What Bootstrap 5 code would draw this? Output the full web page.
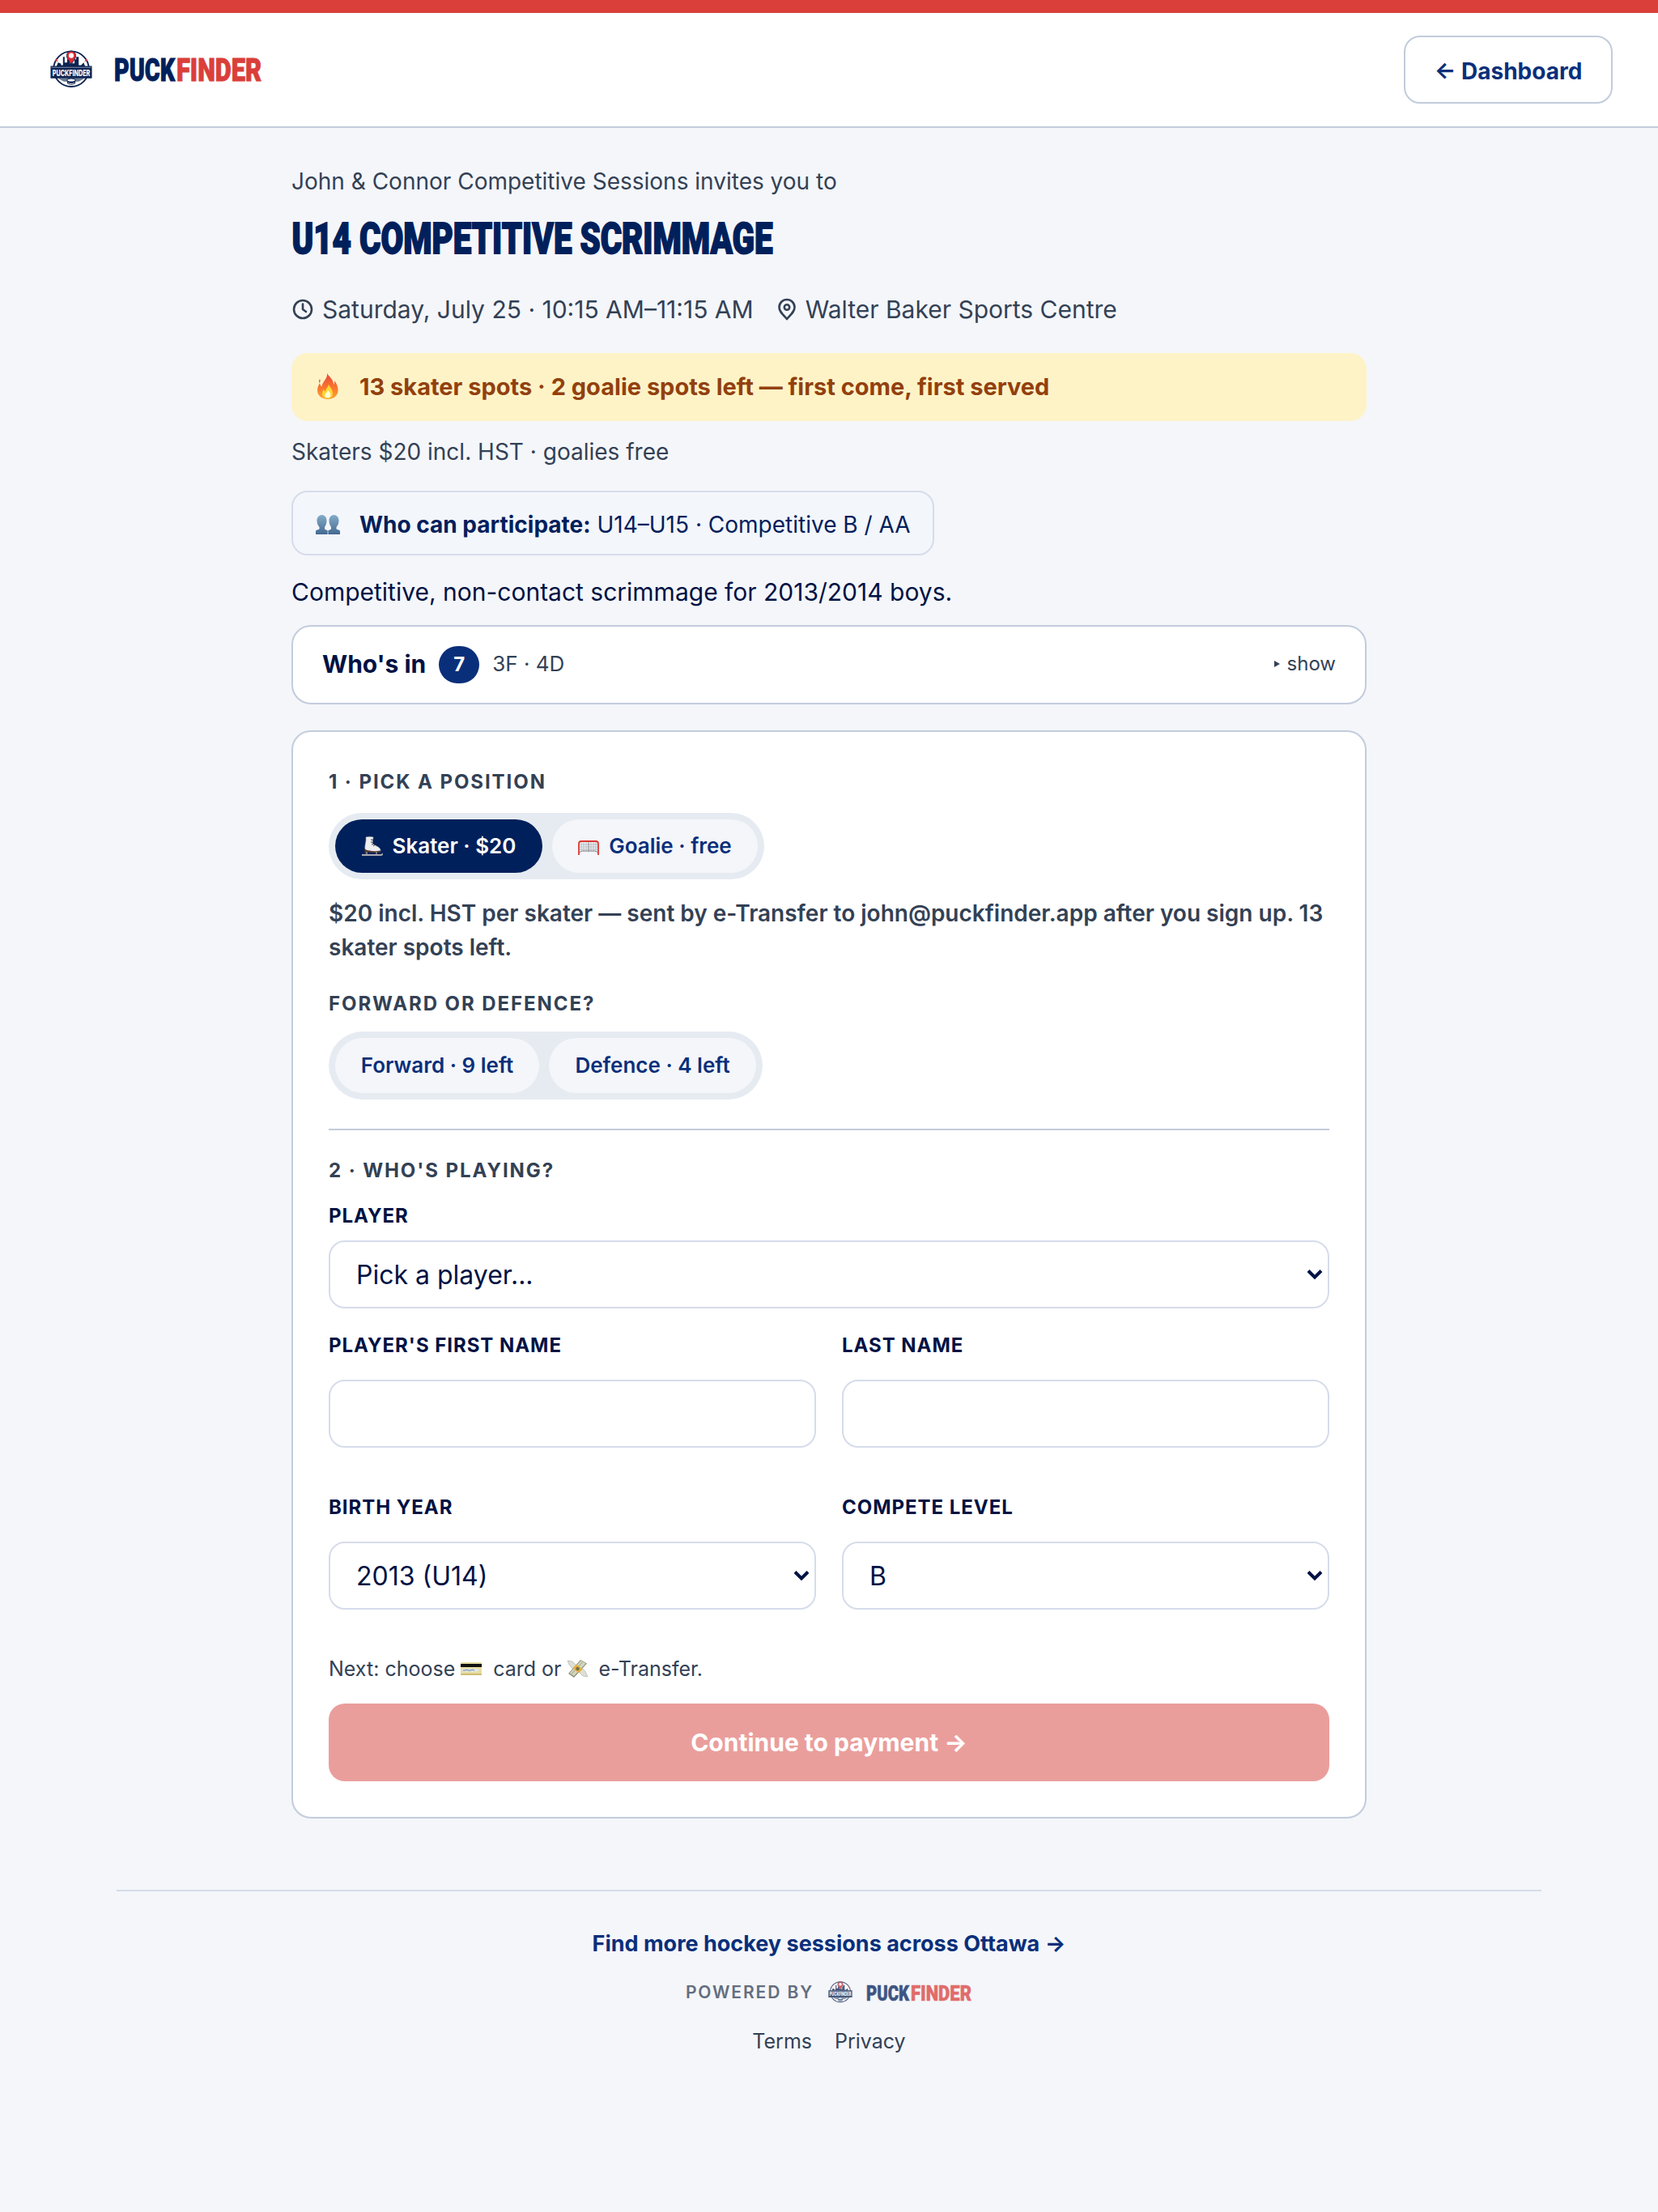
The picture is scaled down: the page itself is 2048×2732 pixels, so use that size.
<!DOCTYPE html>
<html lang="en">
<head>
    <meta charset="utf-8">
    <meta name="viewport" content="width=device-width, initial-scale=1">
    <title>U14 Competitive Scrimmage - PuckFinder</title>
    <link rel="stylesheet" href="https://cdn.jsdelivr.net/npm/bootstrap@5.3.2/dist/css/bootstrap.min.css">
    <style>
        :root {
            --navy: #00205b;
            --blue: #0a2f7a;
            --ink: #001244;
            --slate: #334155;
            --red: #da3f3a;
            --line: #c2ccdc;
            --line-soft: #d6dcea;
        }
        body {
            background-color: #f4f6fa;
            color: var(--ink);
            font-family: Inter, "Liberation Sans", sans-serif;
            font-size: 28px;
            line-height: 42px;
        }
        a {
            text-decoration: none;
        }
        .site-header {
            height: 158px;
            border-top: 16px solid var(--red);
            border-bottom: 2px solid var(--line);
            padding: 0 56px 0 62px;
        }
        .wordmark {
            font-family: Roboto, "Liberation Sans", sans-serif;
            font-weight: 900;
            overflow: visible;
        }
        .btn-dashboard {
            width: 258px;
            height: 84px;
            border: 2px solid var(--line);
            border-radius: 20px;
            background-color: #fff;
            color: var(--blue);
            font-size: 28px;
            font-weight: 700;
        }
        .page-col {
            width: 1328px;
            padding-top: 45px;
        }
        .text-slate {
            color: var(--slate);
        }
        .event-title {
            height: 66px;
            margin: 17px 0 31px;
        }
        .event-meta {
            height: 46px;
            font-size: 30px;
            line-height: 46px;
            margin-bottom: 31px;
        }
        .event-meta span {
            margin-left: 9px;
        }
        .event-meta .meta-when {
            margin-left: 10px;
        }
        .spots-banner {
            height: 84px;
            border-radius: 20px;
            background-color: #fef3c7;
            color: #92400e;
            font-size: 29px;
            font-weight: 700;
            padding-left: 28px;
            margin-bottom: 17px;
        }
        .who-can {
            width: 794px;
            height: 80px;
            border: 2px solid var(--line-soft);
            border-radius: 20px;
            background-color: #f3f6fb;
            color: var(--navy);
            padding: 3px 0 0 28px;
            margin: 27px 0 22px;
        }
        .event-desc {
            font-size: 30px;
            line-height: 46px;
            margin-bottom: 18px;
        }
        .panel {
            background-color: #fff;
            border: 2px solid var(--line);
            border-radius: 24px;
        }
        .roster {
            height: 98px;
            padding: 0 36px 3px 36px;
            margin-bottom: 32px;
            font-size: 26px;
        }
        .roster-title {
            font-size: 30px;
            font-weight: 700;
        }
        .roster-count {
            width: 50px;
            height: 46px;
            border-radius: 23px;
            background-color: var(--blue);
            font-size: 24px;
            font-weight: 700;
            margin: 3px 16px 0 16px;
        }
        .roster-toggle {
            font-size: 24px;
            padding-top: 1px;
        }
        .signup {
            height: 1344px;
            padding: 44px;
        }
        .step-label, .field-label {
            font-size: 24px;
            font-weight: 700;
            line-height: 35px;
            text-transform: uppercase;
        }
        .step-label {
            color: var(--slate);
            letter-spacing: 1.92px;
        }
        .field-label {
            letter-spacing: 0.96px;
            display: block;
        }
        .seg {
            display: flex;
            width: fit-content;
            gap: 12px;
            height: 84px;
            padding: 8px;
            border-radius: 42px;
            background-color: #e6ebf2;
            margin-top: 17px;
        }
        .seg-first {
            height: 82px;
            margin-top: 21px;
        }
        .seg-btn {
            border: 0;
            border-radius: 34px;
            background-color: #f4f6fa;
            color: var(--blue);
            font-size: 26px;
            font-weight: 600;
            padding: 0;
        }
        .seg-btn.chosen {
            background-color: var(--navy);
            color: #fff;
        }
        .w-skater { width: 256px; }
        .w-goalie { width: 254px; }
        .w-forward { width: 252px; }
        .w-defence { width: 256px; }
        .price-note {
            font-weight: 600;
            margin: 21px 0 31px;
        }
        .rule {
            border-top: 2px solid var(--line);
            margin: 36px 0 32px;
        }
        .player-label {
            margin: 21px 0 13px;
        }
        .signup .form-control, .signup .form-select {
            height: 84px;
            border: 2px solid var(--line-soft);
            border-radius: 20px;
            padding: 1px 32px 0;
            font-size: 32px;
            color: var(--ink);
            background-color: #fff;
        }
        .signup .form-select {
            background-image: url("data:image/svg+xml,%3csvg xmlns='http://www.w3.org/2000/svg' viewBox='0 0 20 14'%3e%3cpath fill='none' stroke='%23001244' stroke-width='4' d='M2 2.500l8 8 8-8'/%3e%3c/svg%3e");
            background-size: 20px 14px;
            background-position: right 6px center;
        }
        .two-up {
            display: grid;
            grid-template-columns: 1fr 1fr;
            column-gap: 32px;
            margin-top: 28px;
        }
        .two-up + .two-up {
            margin-top: 56px;
        }
        .two-up .field-label {
            margin-bottom: 25px;
        }
        .next-note {
            font-size: 25px;
            line-height: 38px;
            margin: 54px 0 24px;
        }
        .next-note svg {
            margin: 0 14px 0 7px;
        }
        .btn-pay {
            height: 96px;
            border: 0;
            border-radius: 20px;
            background-color: #ea9e9c;
            color: #fff;
            font-size: 30px;
            font-weight: 700;
            padding-bottom: 2px;
        }
        .site-footer {
            width: 1760px;
            border-top: 2px solid #d5dde7;
            margin-top: 88px;
            padding-top: 44px;
        }
        .more-link {
            color: var(--blue);
            font-size: 27px;
            font-weight: 700;
        }
        .powered {
            height: 32px;
            margin: 23px 0 26px;
            font-size: 21px;
            font-weight: 600;
            letter-spacing: 1.9px;
            opacity: 0.75;
        }
        .legal {
            font-size: 25px;
            line-height: 36px;
        }
        svg {
            flex: none;
        }
    </style>
</head>
<body>

<!-- Shared artwork -->
<svg width="0" height="0" class="position-absolute">
    <defs>
        <linearGradient id="flameOuter" x1="0" y1="0" x2="0" y2="1">
            <stop offset="0" stop-color="#e8453c"/>
            <stop offset="0.6" stop-color="#fb7a2d"/>
            <stop offset="1" stop-color="#fda63a"/>
        </linearGradient>
        <linearGradient id="bust" x1="0" y1="0" x2="0" y2="1">
            <stop offset="0" stop-color="#84abc8"/>
            <stop offset="1" stop-color="#446a92"/>
        </linearGradient>
        <symbol id="crest" viewBox="0 0 50 46">
            <circle cx="25" cy="22.7" r="21.3" fill="#fff" stroke="#0c2350" stroke-width="1.8"/>
            <path fill="#0c2350" d="M7 20l2-5 3 1 1 2h2V8h2v7h3v-4h3v5h6v-5h2V8h3v10h3l3-3 2 5z"/>
            <path fill="#6c7a94" d="M9 34h32l-7 4-18 0z"/>
            <path fill="#da3f3a" d="M8 13l-2-1 1-1zM42 13l2-1-1-1z" stroke="#da3f3a"/>
            <path fill="#e02b33" stroke="#0c2350" stroke-width="0.8" d="M25 17c-3-4.500-5.500-7-5.500-10.500a5.500 5.500 0 0 1 11 0C30.500 10 28 12.500 25 17z"/>
            <circle cx="25" cy="6.500" r="3" fill="#fff"/>
            <path fill="#0c2350" d="M0 19h50v15H0z"/>
            <path stroke="#8b98b0" stroke-width="0.9" d="M1 20.800h48"/>
            <text x="2.300" y="31.300" textLength="45.500" lengthAdjust="spacingAndGlyphs" fill="#fff" font-family="Inter, sans-serif" font-size="10" font-weight="800" letter-spacing="0">PUCKFINDER</text>
            <path fill="#0c2350" d="M20 35.500h10v4c0 3-10 3-10 0z"/>
            <ellipse cx="25" cy="36.200" rx="5" ry="2" fill="#fff" stroke="#0c2350"/>
            <path fill="none" stroke="#fff" stroke-width="0.8" d="M21 39.500c2 1.500 6 1.500 8 0"/>
        </symbol>
        <symbol id="flame" viewBox="0 0 26 32">
            <path fill="url(#flameOuter)" d="M12 0c2 4 8 7 8 14 1-1 1.500-2.500 1-5 3 4 5 8 4.500 13C25 28 20 32 13 32S0 28 0 21c0-4 2-7 3-9 .5 2 1 3.500 2.500 4.500C6 10 13 7 12 0z"/>
            <path fill="#ef5a3a" d="M3 7c1 2 1 3-.5 5C1.500 10 2 8.500 3 7z"/>
            <path fill="#fdd835" d="M14 13c0 3 5 6 5 12 0 4-3 6-6.500 6S6 29 6 25c0-2.500 1-4 2-5 .5 1.500 1 2 2 2.500C10 19 14 17 14 13z"/>
            <path fill="#fffde0" d="M13 21c3 3 4 5 3 7.500-1 2-5.500 2-6.500 0C8.500 26 12 25 13 21z"/>
        </symbol>
        <symbol id="people" viewBox="0 0 30 24">
            <path fill="url(#bust)" d="M0 24v-4.500c1.500-1 3-1.500 4.500-2V15C2.500 13 1.500 10 1.500 7c0-4 2.500-7 6-7s6 3 6 7c0 3-1 6-2.500 8v2.500l4 2 4-2V15c-1.500-2-2.500-5-2.500-8 0-4 2.500-7 6-7s6 3 6 7c0 3-1 6-3 8v2.500c1.500.5 3 1 4.500 2V24z"/>
            <path stroke="#e9f0f7" stroke-width="0.800" d="M15 19.500V24"/>
        </symbol>
        <symbol id="skate" viewBox="0 0 26 24">
            <path fill="#eceef0" stroke="#b9bdc2" stroke-width="0.600" d="M5 1c3-.8 6-.8 9 0l-1 7c2 4 9 4 10 9 0 2-1 2-3 2L5 18C2 13 6 8 5 1z"/>
            <path stroke="#3b3b3b" stroke-width="1" d="M11 4l3 .4M11 7l3 .4M12 10l3-.6M14 12l2-1.500"/>
            <path fill="#55392e" d="M3 15c3 3 6 2 9 3 4 1 8 0 11-.5.500 1.500-.5 2.500-2 2.500H10l-3-1v3H4z"/>
            <path stroke="#a8aab2" stroke-width="2" d="M0 23h24l2-1.500"/>
            <path stroke="#8d8f97" stroke-width="1.500" d="M6 19v3M18 19v3"/>
        </symbol>
        <symbol id="goal" viewBox="0 0 26 18">
            <path fill="#f1f1f3" d="M2 2h22v13H2z"/>
            <path fill="none" stroke="#aaaeb6" stroke-width="0.700" d="M4 2v12M7 2v12M10 2v12M16 2v12M19 2v12M22 2v12M2 5h22M2 8h22M2 11h22"/>
            <path fill="none" stroke="#85888e" stroke-width="1" d="M13 2v12M1 15l4-2h16l4 2"/>
            <path fill="none" stroke="#db3832" stroke-width="1.800" d="M1 18V4c0-2 1-3 3-3h18c2 0 3 1 3 3v14"/>
        </symbol>
        <symbol id="card-pay" viewBox="0 0 26 16">
            <rect width="26" height="16" rx="1.500" fill="#e6dda2"/>
            <path fill="#111" d="M0 2h26v4H0z"/>
            <path fill="#dfe4e6" d="M2 8h20v3.500H2z"/>
            <path fill="none" stroke="#6b86b5" stroke-width="1" d="M3 10h3l1-1 2 1h4l1-1 3 1"/>
            <path fill="#cdbd73" d="M0 14h26v.5c0 1-.5 1.500-1.500 1.500h-23C.5 16 0 15.500 0 14.500z"/>
        </symbol>
        <symbol id="money" viewBox="0 0 25 22">
            <path fill="#dcdfd6" stroke="#a9ada0" stroke-width="0.600" d="M0 1l6 1 5 5-1 5-5-2-3-4zM25 21l-6-1-5-5 1-5 5 2 3 4z"/>
            <path fill="#8a927a" d="M1 17L16 0l8 4.500L8 22z"/>
            <path fill="#d3d6bd" d="M2.500 16.500L16.500 1l6 3.500L8 20z"/>
            <path fill="none" stroke="#8a927a" stroke-width="0.800" d="M5 17.500L18.500 2.800"/>
            <path fill="#e5ad42" d="M6.500 10.500l4.500-5 7.500 6-4.500 5z"/>
            <circle cx="12.500" cy="11" r="2.200" fill="#6f7245"/>
        </symbol>
    </defs>
</svg>

<header class="site-header bg-white d-flex align-items-center justify-content-between">
    <a href="#" class="d-flex align-items-center">
        <svg width="52" height="48"><use href="#crest" width="52" height="47"/></svg>
        <svg class="wordmark ms-4" width="194" height="56">
            <text x="3" y="42" font-size="38.500" textLength="75" lengthAdjust="spacingAndGlyphs" fill="#00205b" stroke="#00205b" stroke-width="1">PUCK</text>
            <text x="80" y="42" font-size="38.500" textLength="105" lengthAdjust="spacingAndGlyphs" fill="#da3f3a" stroke="#da3f3a" stroke-width="1">FINDER</text>
        </svg>
    </a>
    <a href="#" class="btn-dashboard d-flex align-items-center justify-content-center pt-1">← Dashboard</a>
</header>

<main class="page-col mx-auto">
    <div class="text-slate">John &amp; Connor Competitive Sessions invites you to</div>
    <h1 class="event-title">
        <svg class="wordmark d-block" width="620" height="66">
            <text x="0.500" y="51" font-size="53.500" textLength="594" lengthAdjust="spacingAndGlyphs" fill="#00205b" stroke="#00205b" stroke-width="1.800">U14 COMPETITIVE SCRIMMAGE</text>
        </svg>
    </h1>
    <div class="event-meta text-slate d-flex align-items-center">
        <svg width="28" height="28" viewBox="0 0 28 28" fill="none" stroke="currentColor" stroke-width="2.600" stroke-linecap="round" stroke-linejoin="round">
            <circle cx="14" cy="14" r="11"/>
            <path d="M14 7.500V14l4 3"/>
        </svg>
        <span class="meta-when">Saturday, July 25 · 10:15 AM–11:15 AM</span>
        <svg class="ms-4" width="31" height="28" viewBox="-3 0 31 28" fill="none" stroke="currentColor" stroke-width="2.600" stroke-linejoin="round">
            <path d="M14 26C8.500 20 4.500 16.500 4.500 11.500a9.500 9.500 0 0 1 19 0C23.500 16.500 19.500 20 14 26z"/>
            <circle cx="14" cy="11.500" r="3.200"/>
        </svg>
        <span>Walter Baker Sports Centre</span>
    </div>

    <div class="spots-banner d-flex align-items-center">
        <svg class="ms-1 me-4" width="28" height="34"><use href="#flame" width="26" height="32"/></svg>
        <span>13 skater spots · 2 goalie spots left — first come, first served</span>
    </div>
    <div class="text-slate">Skaters $20 incl. HST · goalies free</div>

    <div class="who-can d-flex align-items-center">
        <svg class="me-4" width="30" height="24"><use href="#people" width="30" height="24"/></svg>
        <span><b>Who can participate:</b> U14–U15 · Competitive B / AA</span>
    </div>
    <div class="event-desc">Competitive, non-contact scrimmage for 2013/2014 boys.</div>

    <div class="panel roster d-flex align-items-center">
        <span class="roster-title">Who's in</span>
        <span class="roster-count text-white d-flex align-items-center justify-content-center">7</span>
        <span class="text-slate">3F · 4D</span>
        <span class="roster-toggle ms-auto text-slate d-flex align-items-center">
            <svg class="me-2" width="8" height="8"><path d="M0 0l7 4-7 4z" fill="currentColor"/></svg>
            show
        </span>
    </div>

    <form class="panel signup">
        <div class="step-label">1 · Pick a position</div>
        <div class="seg seg-first">
            <button type="button" class="seg-btn chosen w-skater d-flex align-items-center justify-content-center">
                <svg class="me-2" width="30" height="24"><use href="#skate" width="26" height="24"/></svg>
                Skater · $20
            </button>
            <button type="button" class="seg-btn w-goalie d-flex align-items-center justify-content-center">
                <svg class="me-2" width="30" height="22"><use href="#goal" y="4" width="26" height="18"/></svg>
                Goalie · free
            </button>
        </div>
        <div class="price-note text-slate">$20 incl. HST per skater — sent by e-Transfer to john@puckfinder.app after you sign up. 13 skater spots left.</div>

        <div class="step-label">Forward or defence?</div>
        <div class="seg">
            <button type="button" class="seg-btn w-forward">Forward · 9 left</button>
            <button type="button" class="seg-btn w-defence">Defence · 4 left</button>
        </div>

        <div class="rule"></div>

        <div class="step-label">2 · Who's playing?</div>
        <label class="field-label player-label" for="player">Player</label>
        <select class="form-select" id="player">
            <option>Pick a player...</option>
        </select>

        <div class="two-up">
            <div>
                <label class="field-label" for="firstName">Player's first name</label>
                <input type="text" class="form-control" id="firstName">
            </div>
            <div>
                <label class="field-label" for="lastName">Last name</label>
                <input type="text" class="form-control" id="lastName">
            </div>
        </div>
        <div class="two-up">
            <div>
                <label class="field-label" for="birthYear">Birth year</label>
                <select class="form-select" id="birthYear">
                    <option>2013 (U14)</option>
                </select>
            </div>
            <div>
                <label class="field-label" for="level">Compete level</label>
                <select class="form-select" id="level">
                    <option>B</option>
                </select>
            </div>
        </div>

        <div class="next-note text-slate d-flex align-items-center">
            <span>Next: choose</span>
            <svg width="26" height="16"><use href="#card-pay" width="26" height="16"/></svg>
            <span>card or</span>
            <svg width="25" height="22"><use href="#money" width="25" height="22"/></svg>
            <span>e-Transfer.</span>
        </div>
        <button type="button" class="btn-pay w-100">Continue to payment →</button>
    </form>
</main>

<footer class="site-footer mx-auto text-center">
    <a href="#" class="more-link d-block">Find more hockey sessions across Ottawa →</a>
    <div class="powered text-slate d-flex align-items-center justify-content-center">
        <span>POWERED BY</span>
        <svg class="ms-3" width="33" height="28"><use href="#crest" x="2" width="30" height="27"/></svg>
        <svg class="wordmark ms-3" width="131" height="40" letter-spacing="0">
            <text x="0" y="30" font-size="26" textLength="53" lengthAdjust="spacingAndGlyphs" fill="#00205b" stroke="#00205b" stroke-width="0.600">PUCK</text>
            <text x="55" y="30" font-size="26" textLength="75" lengthAdjust="spacingAndGlyphs" fill="#da3f3a" stroke="#da3f3a" stroke-width="0.600">FINDER</text>
        </svg>
    </div>
    <div class="legal d-flex justify-content-center">
        <a href="#" class="text-slate me-4">Terms</a>
        <a href="#" class="text-slate ms-1">Privacy</a>
    </div>
</footer>

<script src="https://cdn.jsdelivr.net/npm/bootstrap@5.3.2/dist/js/bootstrap.bundle.min.js"></script>
</body>
</html>
